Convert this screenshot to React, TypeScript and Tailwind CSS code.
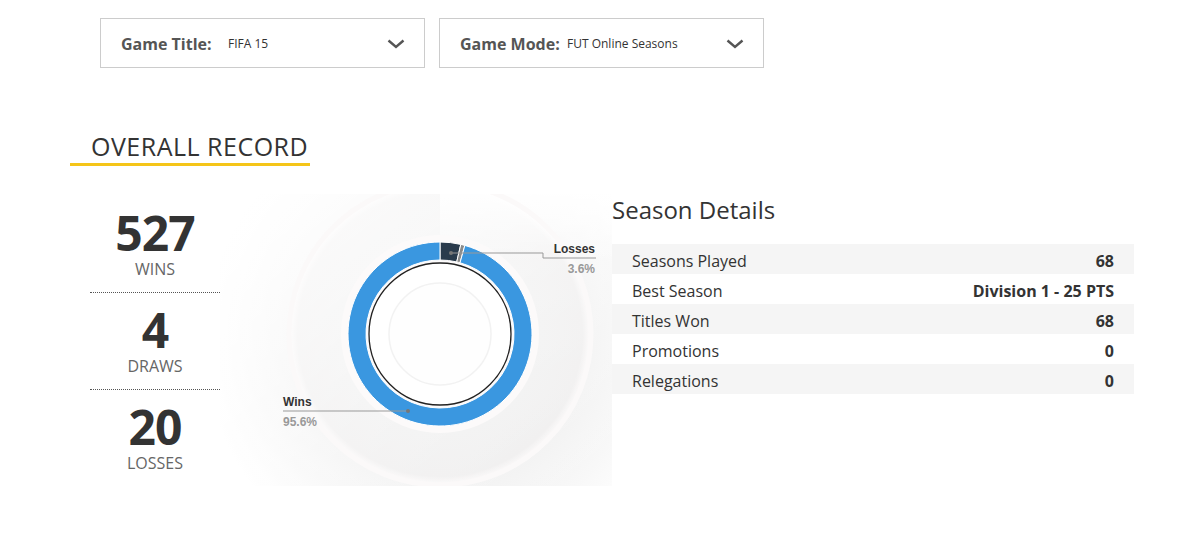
import React from 'react';

const CX = 220;
const CY = 140;
const R_OUT = 92;
const R_IN = 74;

function pt(r: number, deg: number): [number, number] {
  const a = (deg * Math.PI) / 180;
  return [CX + r * Math.sin(a), CY - r * Math.cos(a)];
}

// donut slice, angles clockwise from 12 o'clock
function slice(start: number, end: number): string {
  const large = end - start > 180 ? 1 : 0;
  const [x1, y1] = pt(R_OUT, start);
  const [x2, y2] = pt(R_OUT, end);
  const [x3, y3] = pt(R_IN, end);
  const [x4, y4] = pt(R_IN, start);
  return `M${x1} ${y1} A${R_OUT} ${R_OUT} 0 ${large} 1 ${x2} ${y2} L${x3} ${y3} A${R_IN} ${R_IN} 0 ${large} 0 ${x4} ${y4} Z`;
}

function Chevron() {
  return (
    <svg width="18" height="10" viewBox="0 0 18 10" fill="none">
      <path d="M1.5 1.5L9 8l7.5-6.5" stroke="#555" strokeWidth="2.4" />
    </svg>
  );
}

function Dropdown({ label, value }: { label: string; value: string }) {
  return (
    <div className="flex items-center w-[325px] h-[50px] border border-[#cccccc] pl-[20px] pr-[19px] pt-[1px]">
      <span className="w-[107px] shrink-0 text-[16px] font-bold text-[#555]">{label}</span>
      <span className="flex-1 text-[12px] text-[#333]">{value}</span>
      <Chevron />
    </div>
  );
}

function Stat({ n, label, last }: { n: string; label: string; last?: boolean }) {
  return (
    <div
      className={`flex flex-col items-center pt-[13px] pb-[13px] ${
        last ? '' : 'border-b border-dotted border-[#555]'
      }`}
    >
      <div className="text-[48px] leading-[48px] font-bold text-[#333] tracking-[-1px]">{n}</div>
      <div className="mt-[3px] text-[16px] leading-[19px] text-[#666]">{label}</div>
    </div>
  );
}

const labelFont = "'Liberation Sans', Arial, sans-serif";

function Chart() {
  const total = 527 + 4 + 20;
  const lossEnd = (20 / total) * 360;
  const drawEnd = lossEnd + (4 / total) * 360;
  return (
    <svg width="392" height="292" viewBox="0 0 392 292" className="block">
      <defs>
        <radialGradient id="bg" cx="225" cy="150" r="240" gradientUnits="userSpaceOnUse">
          <stop offset="0" stopColor="#ededed" />
          <stop offset="0.55" stopColor="#f1f1f1" />
          <stop offset="0.8" stopColor="#f8f8f8" />
          <stop offset="1" stopColor="#ffffff" />
        </radialGradient>
        <linearGradient id="lift" x1="0" y1="0" x2="1" y2="1">
          <stop offset="0" stopColor="#ffffff" stopOpacity="0.9" />
          <stop offset="0.55" stopColor="#ffffff" stopOpacity="0.35" />
          <stop offset="1" stopColor="#ffffff" stopOpacity="0" />
        </linearGradient>
        <linearGradient id="topfade" x1="0" y1="0" x2="0" y2="1">
          <stop offset="0" stopColor="#ffffff" stopOpacity="0.9" />
          <stop offset="1" stopColor="#ffffff" stopOpacity="0" />
        </linearGradient>
        <radialGradient id="ring" cx="220" cy="140" r="150" gradientUnits="userSpaceOnUse">
          <stop offset="0.6" stopColor="#fbfbfb" stopOpacity="0" />
          <stop offset="0.66" stopColor="#f0f0f0" />
          <stop offset="0.95" stopColor="#efeeee" />
          <stop offset="1" stopColor="#fbf9f9" />
        </radialGradient>
      </defs>
      <rect width="392" height="292" fill="url(#bg)" />
      <circle cx={CX} cy={CY} r="150" fill="url(#ring)" />
      <rect width="392" height="292" fill="url(#lift)" />
      <rect x="220" y="0" width="172" height="70" fill="url(#topfade)" />
      <circle cx={CX} cy={CY} r="151" fill="none" stroke="#fbf9f9" strokeWidth="5" />
      <circle cx={CX} cy={CY} r="99" fill="#fcfafa" />
      <path d={slice(0, lossEnd)} fill="#2a3b4c" stroke="#fff" strokeWidth="1" />
      <path d={slice(lossEnd, drawEnd)} fill="#8a8a8a" stroke="#fff" strokeWidth="1" />
      <path d={slice(drawEnd, 360)} fill="#3a97e0" stroke="#fff" strokeWidth="1" />
      <circle cx={CX} cy={CY} r="71" fill="#fff" stroke="#222" strokeWidth="1.3" />
      <circle cx={CX} cy={CY} r="51" fill="#fefefe" stroke="#f2f2f2" strokeWidth="1.5" />

      <path d="M231 59H323V64H376" fill="none" stroke="#999" strokeWidth="1" />
      <circle cx="231" cy="59" r="2" fill="#777" />
      <text x="375" y="59" textAnchor="end" fontFamily={labelFont} fontSize="12" fontWeight="bold" fill="#333">
        Losses
      </text>
      <text x="375" y="79" textAnchor="end" fontFamily={labelFont} fontSize="12" fontWeight="bold" fill="#999">
        3.6%
      </text>

      <path d="M63 217H188" fill="none" stroke="#999" strokeWidth="1" />
      <circle cx="188" cy="217" r="2" fill="#777" />
      <text x="63" y="212" fontFamily={labelFont} fontSize="12" fontWeight="bold" fill="#333">
        Wins
      </text>
      <text x="63" y="232" fontFamily={labelFont} fontSize="12" fontWeight="bold" fill="#999">
        95.6%
      </text>
    </svg>
  );
}

const details: [string, string][] = [
  ['Seasons Played', '68'],
  ['Best Season', 'Division 1 - 25 PTS'],
  ['Titles Won', '68'],
  ['Promotions', '0'],
  ['Relegations', '0'],
];

export default function App() {
  return (
    <div className="w-[1204px] h-[544px] bg-white font-['Open_Sans',sans-serif] text-[#333] overflow-hidden">
      <div className="flex gap-[14px] pl-[100px] pt-[18px]">
        <Dropdown label="Game Title:" value="FIFA 15" />
        <Dropdown label="Game Mode:" value="FUT Online Seasons" />
      </div>

      <div className="pl-[70px] mt-[62px]">
        <h2 className="inline-block pl-[21px] pr-[2px] pb-[1px] border-b-[3px] border-[#f5c518] text-[25px] leading-[32px] tracking-[0.5px] font-normal text-[#333] uppercase">
          Overall Record
        </h2>
      </div>

      <div className="flex pl-[90px] mt-[28px]">
        <div className="w-[130px] pt-[2px]">
          <Stat n="527" label="WINS" />
          <Stat n="4" label="DRAWS" />
          <Stat n="20" label="LOSSES" last />
        </div>

        <Chart />

        <div className="w-[522px]">
          <h3 className="text-[24px] leading-[32px] font-normal text-[#333]">Season Details</h3>
          <div className="mt-[18px]">
            {details.map(([k, v], i) => (
              <div
                key={k}
                className={`flex justify-between items-center h-[30px] px-[20px] pt-[4px] text-[16px] ${
                  i % 2 === 0 ? 'bg-[#f5f5f5]' : 'bg-white'
                }`}
              >
                <span className="text-[#333]">{k}</span>
                <span className="font-bold text-[#333]">{v}</span>
              </div>
            ))}
          </div>
        </div>
      </div>
    </div>
  );
}
